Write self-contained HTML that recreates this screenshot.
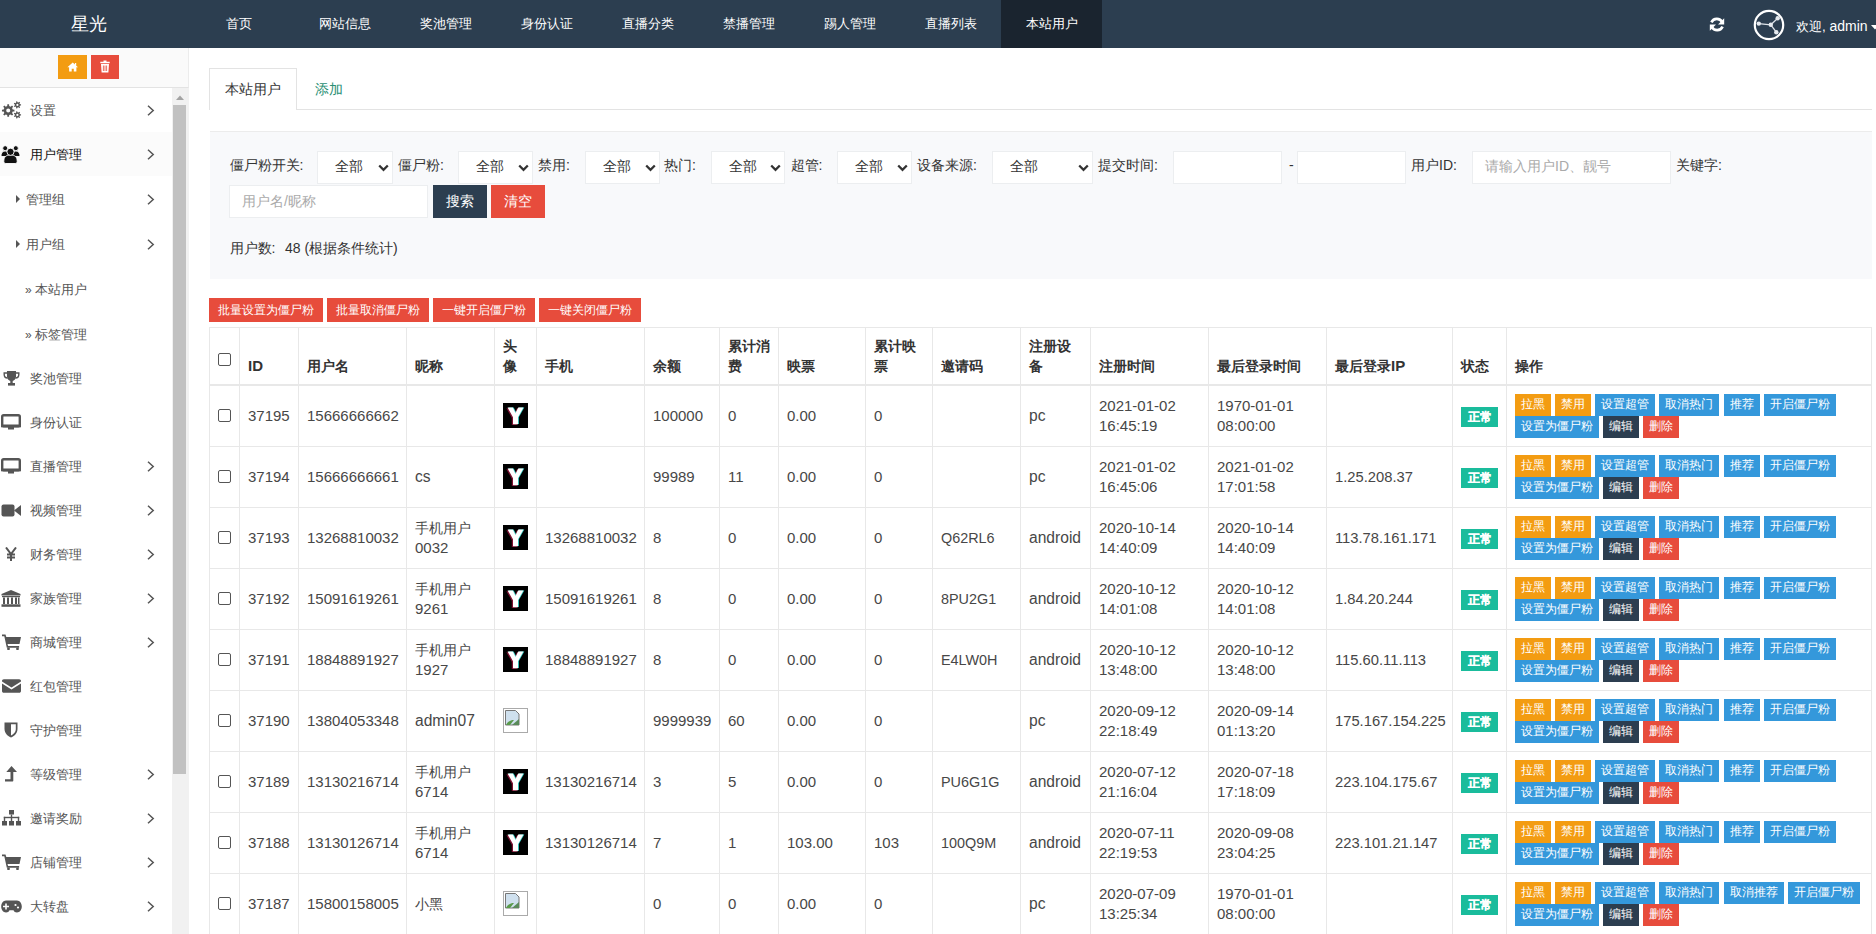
<!DOCTYPE html>
<html><head><meta charset="utf-8"><title>本站用户</title>
<style>
*{box-sizing:border-box}
html,body{margin:0;padding:0}
body{width:1876px;height:934px;overflow:hidden;position:relative;background:#fff;font-family:"Liberation Sans",sans-serif;color:#333;font-size:14px}
.abs{position:absolute;white-space:nowrap}
#hdr{position:absolute;left:0;top:0;width:1876px;height:48px;background:#2c3e50}
.nav{position:absolute;top:16px;font-size:13.4px;line-height:16px;color:#fff}
#side{position:absolute;left:0;top:48px;width:189px;height:886px;background:#fff}
.mi{position:absolute;left:30px;font-size:13.2px;line-height:16px;color:#555}
.chev{position:absolute;left:147px;width:8px;height:11px}
.ico{position:absolute;left:1px}
.gl{position:absolute;background:#e8e8e8}
.td{position:absolute;font-size:15px;line-height:20px;color:#474747;white-space:nowrap}
.td .c,.th .c{font-size:14px}
.td .l{font-size:15.6px}
.th{position:absolute;font-size:15px;line-height:20px;color:#333;font-weight:bold;white-space:nowrap}
.ob{position:absolute;height:21.5px;font-size:12px;line-height:21.5px;color:#fff;text-align:center;white-space:nowrap}
.og{background:#f39c12}.bl{background:#3498db}.dk{background:#2c3e50}.rd{background:#e74c3c}
.cb{position:absolute;left:218px;width:13px;height:13px;border:1px solid #555;border-radius:2px;background:#fff}
.lbl{position:absolute;top:156px;font-size:14px;line-height:18px;color:#333}
.sel{position:absolute;top:150.5px;height:33px;background:#fff;border:1px solid #eceef0}
.sel span{position:absolute;left:17px;top:5.5px;font-size:14px;line-height:18px;color:#333}
.sel svg{position:absolute;top:12px}
.inp{position:absolute;background:#fff;border:1px solid #eceef0}
</style></head><body>

<div id="hdr">
<div class="abs" style="left:71px;top:13px;font-size:18px;line-height:22px;color:#fff">星光</div>
<div style="position:absolute;left:1001px;top:0;width:101px;height:48px;background:#1a242f"></div>
<div class="nav" style="left:226px">首页</div>
<div class="nav" style="left:319px">网站信息</div>
<div class="nav" style="left:419.5px">奖池管理</div>
<div class="nav" style="left:521px">身份认证</div>
<div class="nav" style="left:622px">直播分类</div>
<div class="nav" style="left:723px">禁播管理</div>
<div class="nav" style="left:824px">踢人管理</div>
<div class="nav" style="left:925px">直播列表</div>
<div class="nav" style="left:1026px">本站用户</div>
<svg style="position:absolute;left:1709px;top:17px" width="16" height="15" viewBox="0 0 16 15">
<path d="M13.2 5.2A6 6 0 0 0 2.4 5.4" fill="none" stroke="#fff" stroke-width="2.6"/>
<path d="M15.2 1.2v6.2H9z" fill="#fff"/>
<path d="M2.8 9.8A6 6 0 0 0 13.6 9.6" fill="none" stroke="#fff" stroke-width="2.6"/>
<path d="M0.8 13.8V7.6H7z" fill="#fff"/>
</svg>
<svg style="position:absolute;left:1753px;top:9px" width="32" height="32" viewBox="0 0 32 32">
<circle cx="16" cy="16" r="14.2" fill="none" stroke="#fff" stroke-width="2.2"/>
<g stroke="#dfe4ea" stroke-width="1.3"><line x1="5.8" y1="14.6" x2="17.8" y2="15.8"/><line x1="17.8" y1="15.8" x2="24.7" y2="9.3"/><line x1="17.8" y1="15.8" x2="23.3" y2="23.2"/></g>
<g fill="#e6eaef"><circle cx="5.8" cy="14.6" r="2.2"/><circle cx="17.8" cy="15.8" r="2.2"/><circle cx="24.7" cy="9.3" r="2.2"/><circle cx="23.3" cy="23.2" r="2.2"/></g>
</svg>
<div class="abs" style="left:1796px;top:18px;font-size:13.4px;line-height:16px;color:#fff">欢迎, <span style="font-size:14px">admin</span></div>
<svg style="position:absolute;left:1871px;top:25px" width="8" height="6" viewBox="0 0 8 6"><path d="M0 0h8L4 4.5z" fill="#fff"/></svg>
</div>
<div id="side">
<div style="position:absolute;left:0;top:0;width:189px;height:40px;background:#fafafa;border-bottom:1px solid #e3e3e3;border-right:1px solid #ececec"></div>
<div style="position:absolute;left:58px;top:7px;width:29px;height:24px;background:#f39c12"></div>
<svg style="position:absolute;left:67px;top:14px" width="11.5" height="9.5" viewBox="0 0 13 11"><path d="M6.5 0.5L0.3 6.2h2v4.8h3V7.8h2.4V11h3V6.2h2L10.5 4.2V1.2H9v1.7z" fill="#fff"/></svg>
<div style="position:absolute;left:91px;top:7px;width:28px;height:24px;background:#e74c3c"></div>
<svg style="position:absolute;left:100px;top:12px" width="10" height="13" viewBox="0 0 10 13"><path d="M3.5 0.5h3v1.2h3.2v1.6H0.3V1.7h3.2z M1 4h8l-.6 8.5H1.6z" fill="#fff"/><path d="M3.4 5.5v5.5M5 5.5v5.5M6.6 5.5v5.5" stroke="#e74c3c" stroke-width=".8"/></svg>
<div style="position:absolute;left:172px;top:40px;width:17px;height:846px;background:#f1f1f1"></div>
<svg style="position:absolute;left:176px;top:47px" width="8" height="5" viewBox="0 0 8 5"><path d="M0 5L4 0.5L8 5z" fill="#a3a3a3"/></svg>
<div style="position:absolute;left:173px;top:57px;width:13px;height:669px;background:#c1c1c1"></div>
<div style="position:absolute;left:0;top:84px;width:172px;height:44px;background:#fbfbfb"></div>
<div class="mi" style="top:54.7px;color:#555">设置</div>
<svg class="ico" style="top:53.0px;left:0.5px" width="21" height="18" viewBox="0 0 21 18"><path fill-rule="evenodd" fill="#555" d="M11.69 8.61 L13.44 8.74 L13.44 10.46 L11.69 10.59 L11.07 12.08 L12.22 13.40 L11.00 14.62 L9.68 13.47 L8.19 14.09 L8.06 15.84 L6.34 15.84 L6.21 14.09 L4.72 13.47 L3.40 14.62 L2.18 13.40 L3.33 12.08 L2.71 10.59 L0.96 10.46 L0.96 8.74 L2.71 8.61 L3.33 7.12 L2.18 5.80 L3.40 4.58 L4.72 5.73 L6.21 5.11 L6.34 3.36 L8.06 3.36 L8.19 5.11 L9.68 5.73 L11.00 4.58 L12.22 5.80 L11.07 7.12Z M9.20 9.60 A2.0 2.0 0 1 0 5.20 9.60 A2.0 2.0 0 1 0 9.20 9.60Z M18.92 3.26 L20.05 3.32 L20.05 4.48 L18.92 4.54 L18.47 5.48 L19.13 6.40 L18.23 7.12 L17.48 6.27 L16.46 6.50 L16.15 7.59 L15.02 7.33 L15.22 6.22 L14.40 5.57 L13.36 6.01 L12.86 4.96 L13.85 4.42 L13.85 3.38 L12.86 2.84 L13.36 1.79 L14.40 2.23 L15.22 1.58 L15.02 0.47 L16.15 0.21 L16.46 1.30 L17.48 1.53 L18.23 0.68 L19.13 1.40 L18.47 2.32Z M17.50 3.90 A1.1 1.1 0 1 0 15.30 3.90 A1.1 1.1 0 1 0 17.50 3.90Z M18.92 13.26 L20.05 13.32 L20.05 14.48 L18.92 14.54 L18.47 15.48 L19.13 16.40 L18.23 17.12 L17.48 16.27 L16.46 16.50 L16.15 17.59 L15.02 17.33 L15.22 16.22 L14.40 15.57 L13.36 16.01 L12.86 14.96 L13.85 14.42 L13.85 13.38 L12.86 12.84 L13.36 11.79 L14.40 12.23 L15.22 11.58 L15.02 10.47 L16.15 10.21 L16.46 11.30 L17.48 11.53 L18.23 10.68 L19.13 11.40 L18.47 12.32Z M17.50 13.90 A1.1 1.1 0 1 0 15.30 13.90 A1.1 1.1 0 1 0 17.50 13.90Z"/></svg>
<svg class="chev" style="top:56.5px" width="8" height="11" viewBox="0 0 8 11"><path d="M1 0.8L6.2 5.5L1 10.2" fill="none" stroke="#555" stroke-width="1.5"/></svg>
<div class="mi" style="top:98.69999999999999px;color:#111">用户管理</div>
<svg class="ico" style="top:96.5px;left:0px" width="21" height="19" viewBox="0 0 21 19"><g fill="#111" stroke="#fff" stroke-width="0.9"><path d="M1 11.5c0-3 1-5.5 4.2-5.5s4.2 2.5 4.2 5.5z"/><path d="M11.6 11.5c0-3 1-5.5 4.2-5.5s4.2 2.5 4.2 5.5z"/><circle cx="5.2" cy="3.2" r="2.5"/><circle cx="15.8" cy="3.2" r="2.5"/><path d="M3.8 16.5c0-4.5 2-6.5 6.7-6.5s6.7 2 6.7 6.5c0 1.2-.8 2-2 2H5.8c-1.2 0-2-.8-2-2z"/><circle cx="10.5" cy="6.8" r="3.6"/></g></svg>
<svg class="chev" style="top:100.5px" width="8" height="11" viewBox="0 0 8 11"><path d="M1 0.8L6.2 5.5L1 10.2" fill="none" stroke="#555" stroke-width="1.5"/></svg>
<svg style="position:absolute;left:16px;top:147px" width="4" height="8" viewBox="0 0 4 8"><path d="M0 0L4 4L0 8z" fill="#555"/></svg>
<div class="mi" style="left:25.8px;top:143.7px">管理组</div>
<svg class="chev" style="top:145.5px" width="8" height="11" viewBox="0 0 8 11"><path d="M1 0.8L6.2 5.5L1 10.2" fill="none" stroke="#555" stroke-width="1.5"/></svg>
<svg style="position:absolute;left:16px;top:192px" width="4" height="8" viewBox="0 0 4 8"><path d="M0 0L4 4L0 8z" fill="#555"/></svg>
<div class="mi" style="left:25.8px;top:188.7px">用户组</div>
<svg class="chev" style="top:190.5px" width="8" height="11" viewBox="0 0 8 11"><path d="M1 0.8L6.2 5.5L1 10.2" fill="none" stroke="#555" stroke-width="1.5"/></svg>
<div class="mi" style="left:25px;top:233.7px;font-size:12px">»</div>
<div class="mi" style="left:34.5px;top:233.7px">本站用户</div>
<div class="mi" style="left:25px;top:278.7px;font-size:12px">»</div>
<div class="mi" style="left:34.5px;top:278.7px">标签管理</div>
<div class="mi" style="top:322.7px;color:#555">奖池管理</div>
<svg class="ico" style="top:322.5px;left:3px" width="17" height="15" viewBox="0 0 17 15"><g fill="#555"><path d="M4 0h9v5.5c0 2.6-2 4.5-4.5 4.5S4 8.1 4 5.5z"/><rect x="7.3" y="9" width="2.4" height="3"/><rect x="5" y="12" width="7" height="2.6"/></g><path d="M4 2H1.2v1.5c0 2.2 1.6 3.5 3.4 3.5M13 2h2.8v1.5c0 2.2-1.6 3.5-3.4 3.5" fill="none" stroke="#555" stroke-width="1.4"/></svg>
<div class="mi" style="top:366.7px;color:#555">身份认证</div>
<svg class="ico" style="top:366.0px" width="20" height="16" viewBox="0 0 20 16"><rect x="1.2" y="1.2" width="17.6" height="11" rx="1.5" fill="none" stroke="#555" stroke-width="2.4"/><rect x="0" y="10.5" width="20" height="2.8" fill="#555"/><rect x="7" y="13" width="6" height="2.5" fill="#555"/></svg>
<div class="mi" style="top:410.7px;color:#555">直播管理</div>
<svg class="ico" style="top:410.0px" width="20" height="16" viewBox="0 0 20 16"><rect x="1.2" y="1.2" width="17.6" height="11" rx="1.5" fill="none" stroke="#555" stroke-width="2.4"/><rect x="0" y="10.5" width="20" height="2.8" fill="#555"/><rect x="7" y="13" width="6" height="2.5" fill="#555"/></svg>
<svg class="chev" style="top:412.5px" width="8" height="11" viewBox="0 0 8 11"><path d="M1 0.8L6.2 5.5L1 10.2" fill="none" stroke="#555" stroke-width="1.5"/></svg>
<div class="mi" style="top:454.7px;color:#555">视频管理</div>
<svg class="ico" style="top:455.5px" width="20" height="13" viewBox="0 0 20 13"><rect x="0.5" y="0.5" width="13" height="12" rx="2" fill="#555"/><path d="M13 6.5L20 1v11z" fill="#555"/></svg>
<svg class="chev" style="top:456.5px" width="8" height="11" viewBox="0 0 8 11"><path d="M1 0.8L6.2 5.5L1 10.2" fill="none" stroke="#555" stroke-width="1.5"/></svg>
<div class="mi" style="top:498.70000000000005px;color:#555">财务管理</div>
<svg class="ico" style="top:499.0px;left:5px" width="12" height="14" viewBox="0 0 12 14"><path d="M1 0.5L6 7L11 0.5M6 7v7M2 7.5h8M2 10.5h8" fill="none" stroke="#555" stroke-width="2"/></svg>
<svg class="chev" style="top:500.5px" width="8" height="11" viewBox="0 0 8 11"><path d="M1 0.8L6.2 5.5L1 10.2" fill="none" stroke="#555" stroke-width="1.5"/></svg>
<div class="mi" style="top:542.7px;color:#555">家族管理</div>
<svg class="ico" style="top:541.5px" width="20" height="17" viewBox="0 0 20 17"><g fill="#555"><path d="M10 0L0.5 4v1.5h19V4z"/><rect x="1" y="6" width="18" height="1.2"/><rect x="2" y="7.5" width="2" height="6.5"/><rect x="6" y="7.5" width="2" height="6.5"/><rect x="10" y="7.5" width="2" height="6.5"/><rect x="14" y="7.5" width="2" height="6.5"/><rect x="17" y="7.5" width="1.5" height="6.5"/><rect x="0.5" y="14.3" width="19" height="2.5"/></g></svg>
<svg class="chev" style="top:544.5px" width="8" height="11" viewBox="0 0 8 11"><path d="M1 0.8L6.2 5.5L1 10.2" fill="none" stroke="#555" stroke-width="1.5"/></svg>
<div class="mi" style="top:586.7px;color:#555">商城管理</div>
<svg class="ico" style="top:586.0px;left:2px" width="19" height="16" viewBox="0 0 19 16"><g fill="#555"><path d="M0 0.5h3.5l0.8 2.5H19l-1.5 7H5.5l0.6 2h11v1.8H4.8L2.3 2.3H0z"/><circle cx="6.5" cy="14.8" r="1.4"/><circle cx="15.5" cy="14.8" r="1.4"/></g></svg>
<svg class="chev" style="top:588.5px" width="8" height="11" viewBox="0 0 8 11"><path d="M1 0.8L6.2 5.5L1 10.2" fill="none" stroke="#555" stroke-width="1.5"/></svg>
<div class="mi" style="top:630.7px;color:#555">红包管理</div>
<svg class="ico" style="top:631.0px;left:2px" width="19" height="14" viewBox="0 0 19 14"><g fill="#555"><path d="M0 2c0-1 .8-1.8 1.8-1.8h15.4c1 0 1.8.8 1.8 1.8v.6L9.5 8.5L0 2.6z"/><path d="M0 4.6l9.5 5.9L19 4.6V12c0 1-.8 1.8-1.8 1.8H1.8C.8 13.8 0 13 0 12z"/></g></svg>
<div class="mi" style="top:674.7px;color:#555">守护管理</div>
<svg class="ico" style="top:674.0px;left:4px" width="14" height="16" viewBox="0 0 14 16"><path d="M0.5 0.5h13v6.5c0 4.5-3.5 7.2-6.5 8.5C4 14.2 0.5 11.5 0.5 7z" fill="#555"/><path d="M7 2.2h4.8v4.8c0 3.3-2.5 5.3-4.8 6.5z" fill="#fff"/></svg>
<div class="mi" style="top:718.7px;color:#555">等级管理</div>
<svg class="ico" style="top:718.0px;left:5px" width="12" height="16" viewBox="0 0 12 16"><path d="M6.5 0L12 6H8.3v8.5c0 .6-.4 1-1 1H0v-2.3h5.5V6H1.3z" fill="#555"/></svg>
<svg class="chev" style="top:720.5px" width="8" height="11" viewBox="0 0 8 11"><path d="M1 0.8L6.2 5.5L1 10.2" fill="none" stroke="#555" stroke-width="1.5"/></svg>
<div class="mi" style="top:762.7px;color:#555">邀请奖励</div>
<svg class="ico" style="top:762.0px;left:2px" width="19" height="16" viewBox="0 0 19 16"><g fill="#555"><rect x="7" y="0" width="5" height="4.5"/><rect x="0" y="11" width="5" height="4.5"/><rect x="7" y="11" width="5" height="4.5"/><rect x="14" y="11" width="5" height="4.5"/><rect x="8.8" y="4.5" width="1.4" height="6.5"/><rect x="1.8" y="6.8" width="15.4" height="1.4"/><rect x="1.8" y="6.8" width="1.4" height="4.2"/><rect x="15.8" y="6.8" width="1.4" height="4.2"/></g></svg>
<svg class="chev" style="top:764.5px" width="8" height="11" viewBox="0 0 8 11"><path d="M1 0.8L6.2 5.5L1 10.2" fill="none" stroke="#555" stroke-width="1.5"/></svg>
<div class="mi" style="top:806.7px;color:#555">店铺管理</div>
<svg class="ico" style="top:806.0px;left:2px" width="19" height="16" viewBox="0 0 19 16"><g fill="#555"><path d="M0 0.5h3.5l0.8 2.5H19l-1.5 7H5.5l0.6 2h11v1.8H4.8L2.3 2.3H0z"/><circle cx="6.5" cy="14.8" r="1.4"/><circle cx="15.5" cy="14.8" r="1.4"/></g></svg>
<svg class="chev" style="top:808.5px" width="8" height="11" viewBox="0 0 8 11"><path d="M1 0.8L6.2 5.5L1 10.2" fill="none" stroke="#555" stroke-width="1.5"/></svg>
<div class="mi" style="top:850.7px;color:#555">大转盘</div>
<svg class="ico" style="top:851.5px;left:1px" width="21" height="13" viewBox="0 0 21 13"><path d="M5 0.5h11c2.8 0 4.8 2.8 4.8 6S18.8 12.5 16 12.5c-1.8 0-2.8-1-3.5-2.3h-4C7.8 11.5 6.8 12.5 5 12.5 2.2 12.5 0.2 9.7 0.2 6.5S2.2 0.5 5 0.5z" fill="#555"/><path d="M5 3.5v6M2 6.5h6" stroke="#fff" stroke-width="1.6"/><circle cx="14.5" cy="5" r="1.1" fill="#fff"/><circle cx="17" cy="7.5" r="1.1" fill="#fff"/></svg>
<svg class="chev" style="top:852.5px" width="8" height="11" viewBox="0 0 8 11"><path d="M1 0.8L6.2 5.5L1 10.2" fill="none" stroke="#555" stroke-width="1.5"/></svg>
</div>
<div style="position:absolute;left:209px;top:109px;width:1663px;height:1px;background:#e3e3e3"></div>
<div style="position:absolute;left:209px;top:68px;width:88px;height:42px;background:#fff;border:1px solid #e3e3e3;border-bottom:none"></div>
<div class="abs" style="left:225px;top:80px;font-size:14px;line-height:18px;color:#333">本站用户</div>
<div class="abs" style="left:315px;top:80px;font-size:14px;line-height:18px;color:#2a8f74">添加</div>
<div style="position:absolute;left:210px;top:131px;width:1662px;height:148px;background:#f8f9fb;border-top:1px solid #ececec"></div>
<div class="lbl" style="left:229.5px">僵尸粉开关:</div>
<div class="lbl" style="left:398px">僵尸粉:</div>
<div class="lbl" style="left:538px">禁用:</div>
<div class="lbl" style="left:664px">热门:</div>
<div class="lbl" style="left:790.5px">超管:</div>
<div class="lbl" style="left:917px">设备来源:</div>
<div class="lbl" style="left:1098px">提交时间:</div>
<div class="lbl" style="left:1289px">-</div>
<div class="lbl" style="left:1411px">用户ID:</div>
<div class="lbl" style="left:1676px">关键字:</div>
<div class="sel" style="left:317px;width:75.5px"><span>全部</span><svg style="left:59.5px" width="11" height="8" viewBox="0 0 11 8"><path d="M1.2 1.5L5.5 5.8L9.8 1.5" fill="none" stroke="#333" stroke-width="2.3"/></svg></div>
<div class="sel" style="left:457.5px;width:75px"><span>全部</span><svg style="left:59px" width="11" height="8" viewBox="0 0 11 8"><path d="M1.2 1.5L5.5 5.8L9.8 1.5" fill="none" stroke="#333" stroke-width="2.3"/></svg></div>
<div class="sel" style="left:584.5px;width:75px"><span>全部</span><svg style="left:59px" width="11" height="8" viewBox="0 0 11 8"><path d="M1.2 1.5L5.5 5.8L9.8 1.5" fill="none" stroke="#333" stroke-width="2.3"/></svg></div>
<div class="sel" style="left:711px;width:74px"><span>全部</span><svg style="left:58px" width="11" height="8" viewBox="0 0 11 8"><path d="M1.2 1.5L5.5 5.8L9.8 1.5" fill="none" stroke="#333" stroke-width="2.3"/></svg></div>
<div class="sel" style="left:836.5px;width:75px"><span>全部</span><svg style="left:59px" width="11" height="8" viewBox="0 0 11 8"><path d="M1.2 1.5L5.5 5.8L9.8 1.5" fill="none" stroke="#333" stroke-width="2.3"/></svg></div>
<div class="sel" style="left:991.5px;width:101.5px"><span>全部</span><svg style="left:85.5px" width="11" height="8" viewBox="0 0 11 8"><path d="M1.2 1.5L5.5 5.8L9.8 1.5" fill="none" stroke="#333" stroke-width="2.3"/></svg></div>
<div class="inp" style="left:1172.5px;top:150.5px;width:109px;height:33px"></div>
<div class="inp" style="left:1296.5px;top:150.5px;width:109px;height:33px"></div>
<div class="inp" style="left:1471.5px;top:150.5px;width:199px;height:33px"></div>
<div class="abs" style="left:1485px;top:157px;font-size:14px;line-height:18px;color:#aaa">请输入用户ID、靓号</div>
<div class="inp" style="left:229px;top:184.5px;width:199px;height:33px"></div>
<div class="abs" style="left:242px;top:192px;font-size:14px;line-height:18px;color:#aaa">用户名/昵称</div>
<div style="position:absolute;left:433px;top:184.5px;width:54px;height:33px;background:#2c3e50"></div>
<div class="abs" style="left:446px;top:192px;font-size:14px;line-height:18px;color:#fff">搜索</div>
<div style="position:absolute;left:491px;top:184.5px;width:54px;height:33px;background:#e74c3c"></div>
<div class="abs" style="left:504px;top:192px;font-size:14px;line-height:18px;color:#fff">清空</div>
<div class="abs" style="left:229.5px;top:239px;font-size:14px;line-height:18px;color:#333">用户数:</div>
<div class="abs" style="left:285px;top:239px;font-size:14px;line-height:18px;color:#333">48 (根据条件统计)</div>
<div class="ob rd" style="left:209px;top:298px;width:114px;height:24px;line-height:24px">批量设置为僵尸粉</div>
<div class="ob rd" style="left:327px;top:298px;width:102px;height:24px;line-height:24px">批量取消僵尸粉</div>
<div class="ob rd" style="left:433px;top:298px;width:102px;height:24px;line-height:24px">一键开启僵尸粉</div>
<div class="ob rd" style="left:539px;top:298px;width:102px;height:24px;line-height:24px">一键关闭僵尸粉</div>
<div class="gl" style="left:209px;top:327px;width:1px;height:607px"></div>
<div class="gl" style="left:239px;top:327px;width:1px;height:607px"></div>
<div class="gl" style="left:298px;top:327px;width:1px;height:607px"></div>
<div class="gl" style="left:406px;top:327px;width:1px;height:607px"></div>
<div class="gl" style="left:494px;top:327px;width:1px;height:607px"></div>
<div class="gl" style="left:536px;top:327px;width:1px;height:607px"></div>
<div class="gl" style="left:644px;top:327px;width:1px;height:607px"></div>
<div class="gl" style="left:719px;top:327px;width:1px;height:607px"></div>
<div class="gl" style="left:778px;top:327px;width:1px;height:607px"></div>
<div class="gl" style="left:865px;top:327px;width:1px;height:607px"></div>
<div class="gl" style="left:932px;top:327px;width:1px;height:607px"></div>
<div class="gl" style="left:1020px;top:327px;width:1px;height:607px"></div>
<div class="gl" style="left:1090px;top:327px;width:1px;height:607px"></div>
<div class="gl" style="left:1208px;top:327px;width:1px;height:607px"></div>
<div class="gl" style="left:1326px;top:327px;width:1px;height:607px"></div>
<div class="gl" style="left:1452px;top:327px;width:1px;height:607px"></div>
<div class="gl" style="left:1506px;top:327px;width:1px;height:607px"></div>
<div class="gl" style="left:1871px;top:327px;width:1px;height:607px"></div>
<div class="gl" style="left:209px;top:327px;width:1663px;height:1px"></div>
<div class="gl" style="left:209px;top:384px;width:1663px;height:2px"></div>
<div class="gl" style="left:209px;top:446px;width:1663px;height:1px"></div>
<div class="gl" style="left:209px;top:507px;width:1663px;height:1px"></div>
<div class="gl" style="left:209px;top:568px;width:1663px;height:1px"></div>
<div class="gl" style="left:209px;top:629px;width:1663px;height:1px"></div>
<div class="gl" style="left:209px;top:690px;width:1663px;height:1px"></div>
<div class="gl" style="left:209px;top:751px;width:1663px;height:1px"></div>
<div class="gl" style="left:209px;top:812px;width:1663px;height:1px"></div>
<div class="gl" style="left:209px;top:873px;width:1663px;height:1px"></div>
<div class="cb" style="top:353px"></div>
<div class="th" style="left:248px;top:356px">ID</div>
<div class="th" style="left:307px;top:356px"><span class="c">用户名</span></div>
<div class="th" style="left:415px;top:356px"><span class="c">昵称</span></div>
<div class="th" style="left:503px;top:336px"><span class="c">头</span><br><span class="c">像</span></div>
<div class="th" style="left:545px;top:356px"><span class="c">手机</span></div>
<div class="th" style="left:653px;top:356px"><span class="c">余额</span></div>
<div class="th" style="left:728px;top:336px"><span class="c">累计消</span><br><span class="c">费</span></div>
<div class="th" style="left:787px;top:356px"><span class="c">映票</span></div>
<div class="th" style="left:874px;top:336px"><span class="c">累计映</span><br><span class="c">票</span></div>
<div class="th" style="left:941px;top:356px"><span class="c">邀请码</span></div>
<div class="th" style="left:1029px;top:336px"><span class="c">注册设</span><br><span class="c">备</span></div>
<div class="th" style="left:1099px;top:356px"><span class="c">注册时间</span></div>
<div class="th" style="left:1217px;top:356px"><span class="c">最后登录时间</span></div>
<div class="th" style="left:1335px;top:356px"><span class="c">最后登录</span>IP</div>
<div class="th" style="left:1461px;top:356px"><span class="c">状态</span></div>
<div class="th" style="left:1515px;top:356px"><span class="c">操作</span></div>
<div class="cb" style="top:409px"></div>
<div class="td" style="left:248px;top:406px">37195</div>
<div class="td" style="left:307px;top:406px">15666666662</div>
<svg style="position:absolute;left:503px;top:403px" width="25" height="25" viewBox="0 0 25 25"><rect width="25" height="25" fill="#000"/><path d="M4.6 4.6h5.2L12.5 10l2.7-5.4h5.2L15 14.3v7H10v-7z" fill="#7a1030" transform="translate(-1.2 0.6)"/><path d="M4.6 4.6h5.2L12.5 10l2.7-5.4h5.2L15 14.3v7H10v-7z" fill="#3ad1c8" transform="translate(0.9 -0.2)"/><path d="M4.6 4.6h5.2L12.5 10l2.7-5.4h5.2L15 14.3v7H10v-7z" fill="#fff"/></svg>
<div class="td" style="left:653px;top:406px">100000</div>
<div class="td" style="left:728px;top:406px">0</div>
<div class="td" style="left:787px;top:406px">0.00</div>
<div class="td" style="left:874px;top:406px">0</div>
<div class="td" style="left:1029px;top:406px"><span class="l">pc</span></div>
<div class="td" style="left:1099px;top:396px">2021-01-02<br>16:45:19</div>
<div class="td" style="left:1217px;top:396px">1970-01-01<br>08:00:00</div>
<div class="ob" style="left:1461px;top:407px;width:37px;height:20px;line-height:20px;background:#1abc9c;font-weight:bold;-webkit-text-stroke:0.2px #fff">正常</div>
<div class="ob og" style="left:1515.2px;top:394px;width:35.5px">拉黑</div>
<div class="ob og" style="left:1555.1px;top:394px;width:35.7px">禁用</div>
<div class="ob bl" style="left:1595.3px;top:394px;width:59.5px">设置超管</div>
<div class="ob bl" style="left:1659.1px;top:394px;width:59.7px">取消热门</div>
<div class="ob bl" style="left:1724px;top:394px;width:35.5px">推荐</div>
<div class="ob bl" style="left:1764px;top:394px;width:71.6px">开启僵尸粉</div>
<div class="ob bl" style="left:1515.2px;top:416px;width:83.5px">设置为僵尸粉</div>
<div class="ob dk" style="left:1603.3px;top:416px;width:35.3px">编辑</div>
<div class="ob rd" style="left:1643px;top:416px;width:35.7px">删除</div>
<div class="cb" style="top:470px"></div>
<div class="td" style="left:248px;top:467px">37194</div>
<div class="td" style="left:307px;top:467px">15666666661</div>
<div class="td" style="left:415px;top:467px"><span class="l">cs</span></div>
<svg style="position:absolute;left:503px;top:464px" width="25" height="25" viewBox="0 0 25 25"><rect width="25" height="25" fill="#000"/><path d="M4.6 4.6h5.2L12.5 10l2.7-5.4h5.2L15 14.3v7H10v-7z" fill="#7a1030" transform="translate(-1.2 0.6)"/><path d="M4.6 4.6h5.2L12.5 10l2.7-5.4h5.2L15 14.3v7H10v-7z" fill="#3ad1c8" transform="translate(0.9 -0.2)"/><path d="M4.6 4.6h5.2L12.5 10l2.7-5.4h5.2L15 14.3v7H10v-7z" fill="#fff"/></svg>
<div class="td" style="left:653px;top:467px">99989</div>
<div class="td" style="left:728px;top:467px">11</div>
<div class="td" style="left:787px;top:467px">0.00</div>
<div class="td" style="left:874px;top:467px">0</div>
<div class="td" style="left:1029px;top:467px"><span class="l">pc</span></div>
<div class="td" style="left:1099px;top:457px">2021-01-02<br>16:45:06</div>
<div class="td" style="left:1217px;top:457px">2021-01-02<br>17:01:58</div>
<div class="td" style="left:1335px;top:467px;font-size:14.75px">1.25.208.37</div>
<div class="ob" style="left:1461px;top:468px;width:37px;height:20px;line-height:20px;background:#1abc9c;font-weight:bold;-webkit-text-stroke:0.2px #fff">正常</div>
<div class="ob og" style="left:1515.2px;top:455px;width:35.5px">拉黑</div>
<div class="ob og" style="left:1555.1px;top:455px;width:35.7px">禁用</div>
<div class="ob bl" style="left:1595.3px;top:455px;width:59.5px">设置超管</div>
<div class="ob bl" style="left:1659.1px;top:455px;width:59.7px">取消热门</div>
<div class="ob bl" style="left:1724px;top:455px;width:35.5px">推荐</div>
<div class="ob bl" style="left:1764px;top:455px;width:71.6px">开启僵尸粉</div>
<div class="ob bl" style="left:1515.2px;top:477px;width:83.5px">设置为僵尸粉</div>
<div class="ob dk" style="left:1603.3px;top:477px;width:35.3px">编辑</div>
<div class="ob rd" style="left:1643px;top:477px;width:35.7px">删除</div>
<div class="cb" style="top:531px"></div>
<div class="td" style="left:248px;top:528px">37193</div>
<div class="td" style="left:307px;top:528px">13268810032</div>
<div class="td" style="left:415px;top:518px"><span class="c">手机用户</span><br>0032</div>
<svg style="position:absolute;left:503px;top:525px" width="25" height="25" viewBox="0 0 25 25"><rect width="25" height="25" fill="#000"/><path d="M4.6 4.6h5.2L12.5 10l2.7-5.4h5.2L15 14.3v7H10v-7z" fill="#7a1030" transform="translate(-1.2 0.6)"/><path d="M4.6 4.6h5.2L12.5 10l2.7-5.4h5.2L15 14.3v7H10v-7z" fill="#3ad1c8" transform="translate(0.9 -0.2)"/><path d="M4.6 4.6h5.2L12.5 10l2.7-5.4h5.2L15 14.3v7H10v-7z" fill="#fff"/></svg>
<div class="td" style="left:545px;top:528px">13268810032</div>
<div class="td" style="left:653px;top:528px">8</div>
<div class="td" style="left:728px;top:528px">0</div>
<div class="td" style="left:787px;top:528px">0.00</div>
<div class="td" style="left:874px;top:528px">0</div>
<div class="td" style="left:941px;top:528px;font-size:14.4px">Q62RL6</div>
<div class="td" style="left:1029px;top:528px"><span class="l">android</span></div>
<div class="td" style="left:1099px;top:518px">2020-10-14<br>14:40:09</div>
<div class="td" style="left:1217px;top:518px">2020-10-14<br>14:40:09</div>
<div class="td" style="left:1335px;top:528px;font-size:14.75px">113.78.161.171</div>
<div class="ob" style="left:1461px;top:529px;width:37px;height:20px;line-height:20px;background:#1abc9c;font-weight:bold;-webkit-text-stroke:0.2px #fff">正常</div>
<div class="ob og" style="left:1515.2px;top:516px;width:35.5px">拉黑</div>
<div class="ob og" style="left:1555.1px;top:516px;width:35.7px">禁用</div>
<div class="ob bl" style="left:1595.3px;top:516px;width:59.5px">设置超管</div>
<div class="ob bl" style="left:1659.1px;top:516px;width:59.7px">取消热门</div>
<div class="ob bl" style="left:1724px;top:516px;width:35.5px">推荐</div>
<div class="ob bl" style="left:1764px;top:516px;width:71.6px">开启僵尸粉</div>
<div class="ob bl" style="left:1515.2px;top:538px;width:83.5px">设置为僵尸粉</div>
<div class="ob dk" style="left:1603.3px;top:538px;width:35.3px">编辑</div>
<div class="ob rd" style="left:1643px;top:538px;width:35.7px">删除</div>
<div class="cb" style="top:592px"></div>
<div class="td" style="left:248px;top:589px">37192</div>
<div class="td" style="left:307px;top:589px">15091619261</div>
<div class="td" style="left:415px;top:579px"><span class="c">手机用户</span><br>9261</div>
<svg style="position:absolute;left:503px;top:586px" width="25" height="25" viewBox="0 0 25 25"><rect width="25" height="25" fill="#000"/><path d="M4.6 4.6h5.2L12.5 10l2.7-5.4h5.2L15 14.3v7H10v-7z" fill="#7a1030" transform="translate(-1.2 0.6)"/><path d="M4.6 4.6h5.2L12.5 10l2.7-5.4h5.2L15 14.3v7H10v-7z" fill="#3ad1c8" transform="translate(0.9 -0.2)"/><path d="M4.6 4.6h5.2L12.5 10l2.7-5.4h5.2L15 14.3v7H10v-7z" fill="#fff"/></svg>
<div class="td" style="left:545px;top:589px">15091619261</div>
<div class="td" style="left:653px;top:589px">8</div>
<div class="td" style="left:728px;top:589px">0</div>
<div class="td" style="left:787px;top:589px">0.00</div>
<div class="td" style="left:874px;top:589px">0</div>
<div class="td" style="left:941px;top:589px;font-size:14.4px">8PU2G1</div>
<div class="td" style="left:1029px;top:589px"><span class="l">android</span></div>
<div class="td" style="left:1099px;top:579px">2020-10-12<br>14:01:08</div>
<div class="td" style="left:1217px;top:579px">2020-10-12<br>14:01:08</div>
<div class="td" style="left:1335px;top:589px;font-size:14.75px">1.84.20.244</div>
<div class="ob" style="left:1461px;top:590px;width:37px;height:20px;line-height:20px;background:#1abc9c;font-weight:bold;-webkit-text-stroke:0.2px #fff">正常</div>
<div class="ob og" style="left:1515.2px;top:577px;width:35.5px">拉黑</div>
<div class="ob og" style="left:1555.1px;top:577px;width:35.7px">禁用</div>
<div class="ob bl" style="left:1595.3px;top:577px;width:59.5px">设置超管</div>
<div class="ob bl" style="left:1659.1px;top:577px;width:59.7px">取消热门</div>
<div class="ob bl" style="left:1724px;top:577px;width:35.5px">推荐</div>
<div class="ob bl" style="left:1764px;top:577px;width:71.6px">开启僵尸粉</div>
<div class="ob bl" style="left:1515.2px;top:599px;width:83.5px">设置为僵尸粉</div>
<div class="ob dk" style="left:1603.3px;top:599px;width:35.3px">编辑</div>
<div class="ob rd" style="left:1643px;top:599px;width:35.7px">删除</div>
<div class="cb" style="top:653px"></div>
<div class="td" style="left:248px;top:650px">37191</div>
<div class="td" style="left:307px;top:650px">18848891927</div>
<div class="td" style="left:415px;top:640px"><span class="c">手机用户</span><br>1927</div>
<svg style="position:absolute;left:503px;top:647px" width="25" height="25" viewBox="0 0 25 25"><rect width="25" height="25" fill="#000"/><path d="M4.6 4.6h5.2L12.5 10l2.7-5.4h5.2L15 14.3v7H10v-7z" fill="#7a1030" transform="translate(-1.2 0.6)"/><path d="M4.6 4.6h5.2L12.5 10l2.7-5.4h5.2L15 14.3v7H10v-7z" fill="#3ad1c8" transform="translate(0.9 -0.2)"/><path d="M4.6 4.6h5.2L12.5 10l2.7-5.4h5.2L15 14.3v7H10v-7z" fill="#fff"/></svg>
<div class="td" style="left:545px;top:650px">18848891927</div>
<div class="td" style="left:653px;top:650px">8</div>
<div class="td" style="left:728px;top:650px">0</div>
<div class="td" style="left:787px;top:650px">0.00</div>
<div class="td" style="left:874px;top:650px">0</div>
<div class="td" style="left:941px;top:650px;font-size:14.4px">E4LW0H</div>
<div class="td" style="left:1029px;top:650px"><span class="l">android</span></div>
<div class="td" style="left:1099px;top:640px">2020-10-12<br>13:48:00</div>
<div class="td" style="left:1217px;top:640px">2020-10-12<br>13:48:00</div>
<div class="td" style="left:1335px;top:650px;font-size:14.75px">115.60.11.113</div>
<div class="ob" style="left:1461px;top:651px;width:37px;height:20px;line-height:20px;background:#1abc9c;font-weight:bold;-webkit-text-stroke:0.2px #fff">正常</div>
<div class="ob og" style="left:1515.2px;top:638px;width:35.5px">拉黑</div>
<div class="ob og" style="left:1555.1px;top:638px;width:35.7px">禁用</div>
<div class="ob bl" style="left:1595.3px;top:638px;width:59.5px">设置超管</div>
<div class="ob bl" style="left:1659.1px;top:638px;width:59.7px">取消热门</div>
<div class="ob bl" style="left:1724px;top:638px;width:35.5px">推荐</div>
<div class="ob bl" style="left:1764px;top:638px;width:71.6px">开启僵尸粉</div>
<div class="ob bl" style="left:1515.2px;top:660px;width:83.5px">设置为僵尸粉</div>
<div class="ob dk" style="left:1603.3px;top:660px;width:35.3px">编辑</div>
<div class="ob rd" style="left:1643px;top:660px;width:35.7px">删除</div>
<div class="cb" style="top:714px"></div>
<div class="td" style="left:248px;top:711px">37190</div>
<div class="td" style="left:307px;top:711px">13804053348</div>
<div class="td" style="left:415px;top:711px"><span class="l">admin07</span></div>
<svg style="position:absolute;left:503px;top:708px" width="25" height="25" viewBox="0 0 25 25"><rect x="0.5" y="0.5" width="24" height="24" fill="#fff" stroke="#aaa"/><path d="M2.5 2.5h10l3.5 3.5v11h-13.5z" fill="#cfe0ee" stroke="#777" stroke-width="1"/><path d="M3 17c2-4 5-5 8-5l-4 5z" fill="#5a9a4a"/><path d="M9 17l7-6v6z" fill="#5a8a5a"/></svg>
<div class="td" style="left:653px;top:711px">9999939</div>
<div class="td" style="left:728px;top:711px">60</div>
<div class="td" style="left:787px;top:711px">0.00</div>
<div class="td" style="left:874px;top:711px">0</div>
<div class="td" style="left:1029px;top:711px"><span class="l">pc</span></div>
<div class="td" style="left:1099px;top:701px">2020-09-12<br>22:18:49</div>
<div class="td" style="left:1217px;top:701px">2020-09-14<br>01:13:20</div>
<div class="td" style="left:1335px;top:711px;font-size:14.75px">175.167.154.225</div>
<div class="ob" style="left:1461px;top:712px;width:37px;height:20px;line-height:20px;background:#1abc9c;font-weight:bold;-webkit-text-stroke:0.2px #fff">正常</div>
<div class="ob og" style="left:1515.2px;top:699px;width:35.5px">拉黑</div>
<div class="ob og" style="left:1555.1px;top:699px;width:35.7px">禁用</div>
<div class="ob bl" style="left:1595.3px;top:699px;width:59.5px">设置超管</div>
<div class="ob bl" style="left:1659.1px;top:699px;width:59.7px">取消热门</div>
<div class="ob bl" style="left:1724px;top:699px;width:35.5px">推荐</div>
<div class="ob bl" style="left:1764px;top:699px;width:71.6px">开启僵尸粉</div>
<div class="ob bl" style="left:1515.2px;top:721px;width:83.5px">设置为僵尸粉</div>
<div class="ob dk" style="left:1603.3px;top:721px;width:35.3px">编辑</div>
<div class="ob rd" style="left:1643px;top:721px;width:35.7px">删除</div>
<div class="cb" style="top:775px"></div>
<div class="td" style="left:248px;top:772px">37189</div>
<div class="td" style="left:307px;top:772px">13130216714</div>
<div class="td" style="left:415px;top:762px"><span class="c">手机用户</span><br>6714</div>
<svg style="position:absolute;left:503px;top:769px" width="25" height="25" viewBox="0 0 25 25"><rect width="25" height="25" fill="#000"/><path d="M4.6 4.6h5.2L12.5 10l2.7-5.4h5.2L15 14.3v7H10v-7z" fill="#7a1030" transform="translate(-1.2 0.6)"/><path d="M4.6 4.6h5.2L12.5 10l2.7-5.4h5.2L15 14.3v7H10v-7z" fill="#3ad1c8" transform="translate(0.9 -0.2)"/><path d="M4.6 4.6h5.2L12.5 10l2.7-5.4h5.2L15 14.3v7H10v-7z" fill="#fff"/></svg>
<div class="td" style="left:545px;top:772px">13130216714</div>
<div class="td" style="left:653px;top:772px">3</div>
<div class="td" style="left:728px;top:772px">5</div>
<div class="td" style="left:787px;top:772px">0.00</div>
<div class="td" style="left:874px;top:772px">0</div>
<div class="td" style="left:941px;top:772px;font-size:14.4px">PU6G1G</div>
<div class="td" style="left:1029px;top:772px"><span class="l">android</span></div>
<div class="td" style="left:1099px;top:762px">2020-07-12<br>21:16:04</div>
<div class="td" style="left:1217px;top:762px">2020-07-18<br>17:18:09</div>
<div class="td" style="left:1335px;top:772px;font-size:14.75px">223.104.175.67</div>
<div class="ob" style="left:1461px;top:773px;width:37px;height:20px;line-height:20px;background:#1abc9c;font-weight:bold;-webkit-text-stroke:0.2px #fff">正常</div>
<div class="ob og" style="left:1515.2px;top:760px;width:35.5px">拉黑</div>
<div class="ob og" style="left:1555.1px;top:760px;width:35.7px">禁用</div>
<div class="ob bl" style="left:1595.3px;top:760px;width:59.5px">设置超管</div>
<div class="ob bl" style="left:1659.1px;top:760px;width:59.7px">取消热门</div>
<div class="ob bl" style="left:1724px;top:760px;width:35.5px">推荐</div>
<div class="ob bl" style="left:1764px;top:760px;width:71.6px">开启僵尸粉</div>
<div class="ob bl" style="left:1515.2px;top:782px;width:83.5px">设置为僵尸粉</div>
<div class="ob dk" style="left:1603.3px;top:782px;width:35.3px">编辑</div>
<div class="ob rd" style="left:1643px;top:782px;width:35.7px">删除</div>
<div class="cb" style="top:836px"></div>
<div class="td" style="left:248px;top:833px">37188</div>
<div class="td" style="left:307px;top:833px">13130126714</div>
<div class="td" style="left:415px;top:823px"><span class="c">手机用户</span><br>6714</div>
<svg style="position:absolute;left:503px;top:830px" width="25" height="25" viewBox="0 0 25 25"><rect width="25" height="25" fill="#000"/><path d="M4.6 4.6h5.2L12.5 10l2.7-5.4h5.2L15 14.3v7H10v-7z" fill="#7a1030" transform="translate(-1.2 0.6)"/><path d="M4.6 4.6h5.2L12.5 10l2.7-5.4h5.2L15 14.3v7H10v-7z" fill="#3ad1c8" transform="translate(0.9 -0.2)"/><path d="M4.6 4.6h5.2L12.5 10l2.7-5.4h5.2L15 14.3v7H10v-7z" fill="#fff"/></svg>
<div class="td" style="left:545px;top:833px">13130126714</div>
<div class="td" style="left:653px;top:833px">7</div>
<div class="td" style="left:728px;top:833px">1</div>
<div class="td" style="left:787px;top:833px">103.00</div>
<div class="td" style="left:874px;top:833px">103</div>
<div class="td" style="left:941px;top:833px;font-size:14.4px">100Q9M</div>
<div class="td" style="left:1029px;top:833px"><span class="l">android</span></div>
<div class="td" style="left:1099px;top:823px">2020-07-11<br>22:19:53</div>
<div class="td" style="left:1217px;top:823px">2020-09-08<br>23:04:25</div>
<div class="td" style="left:1335px;top:833px;font-size:14.75px">223.101.21.147</div>
<div class="ob" style="left:1461px;top:834px;width:37px;height:20px;line-height:20px;background:#1abc9c;font-weight:bold;-webkit-text-stroke:0.2px #fff">正常</div>
<div class="ob og" style="left:1515.2px;top:821px;width:35.5px">拉黑</div>
<div class="ob og" style="left:1555.1px;top:821px;width:35.7px">禁用</div>
<div class="ob bl" style="left:1595.3px;top:821px;width:59.5px">设置超管</div>
<div class="ob bl" style="left:1659.1px;top:821px;width:59.7px">取消热门</div>
<div class="ob bl" style="left:1724px;top:821px;width:35.5px">推荐</div>
<div class="ob bl" style="left:1764px;top:821px;width:71.6px">开启僵尸粉</div>
<div class="ob bl" style="left:1515.2px;top:843px;width:83.5px">设置为僵尸粉</div>
<div class="ob dk" style="left:1603.3px;top:843px;width:35.3px">编辑</div>
<div class="ob rd" style="left:1643px;top:843px;width:35.7px">删除</div>
<div class="cb" style="top:897px"></div>
<div class="td" style="left:248px;top:894px">37187</div>
<div class="td" style="left:307px;top:894px">15800158005</div>
<div class="td" style="left:415px;top:894px"><span class="c">小黑</span></div>
<svg style="position:absolute;left:503px;top:891px" width="25" height="25" viewBox="0 0 25 25"><rect x="0.5" y="0.5" width="24" height="24" fill="#fff" stroke="#aaa"/><path d="M2.5 2.5h10l3.5 3.5v11h-13.5z" fill="#cfe0ee" stroke="#777" stroke-width="1"/><path d="M3 17c2-4 5-5 8-5l-4 5z" fill="#5a9a4a"/><path d="M9 17l7-6v6z" fill="#5a8a5a"/></svg>
<div class="td" style="left:653px;top:894px">0</div>
<div class="td" style="left:728px;top:894px">0</div>
<div class="td" style="left:787px;top:894px">0.00</div>
<div class="td" style="left:874px;top:894px">0</div>
<div class="td" style="left:1029px;top:894px"><span class="l">pc</span></div>
<div class="td" style="left:1099px;top:884px">2020-07-09<br>13:25:34</div>
<div class="td" style="left:1217px;top:884px">1970-01-01<br>08:00:00</div>
<div class="ob" style="left:1461px;top:895px;width:37px;height:20px;line-height:20px;background:#1abc9c;font-weight:bold;-webkit-text-stroke:0.2px #fff">正常</div>
<div class="ob og" style="left:1515.2px;top:882px;width:35.5px">拉黑</div>
<div class="ob og" style="left:1555.1px;top:882px;width:35.7px">禁用</div>
<div class="ob bl" style="left:1595.3px;top:882px;width:59.5px">设置超管</div>
<div class="ob bl" style="left:1659.1px;top:882px;width:59.7px">取消热门</div>
<div class="ob bl" style="left:1724px;top:882px;width:59.5px">取消推荐</div>
<div class="ob bl" style="left:1788px;top:882px;width:71.6px">开启僵尸粉</div>
<div class="ob bl" style="left:1515.2px;top:904px;width:83.5px">设置为僵尸粉</div>
<div class="ob dk" style="left:1603.3px;top:904px;width:35.3px">编辑</div>
<div class="ob rd" style="left:1643px;top:904px;width:35.7px">删除</div>
</body></html>
